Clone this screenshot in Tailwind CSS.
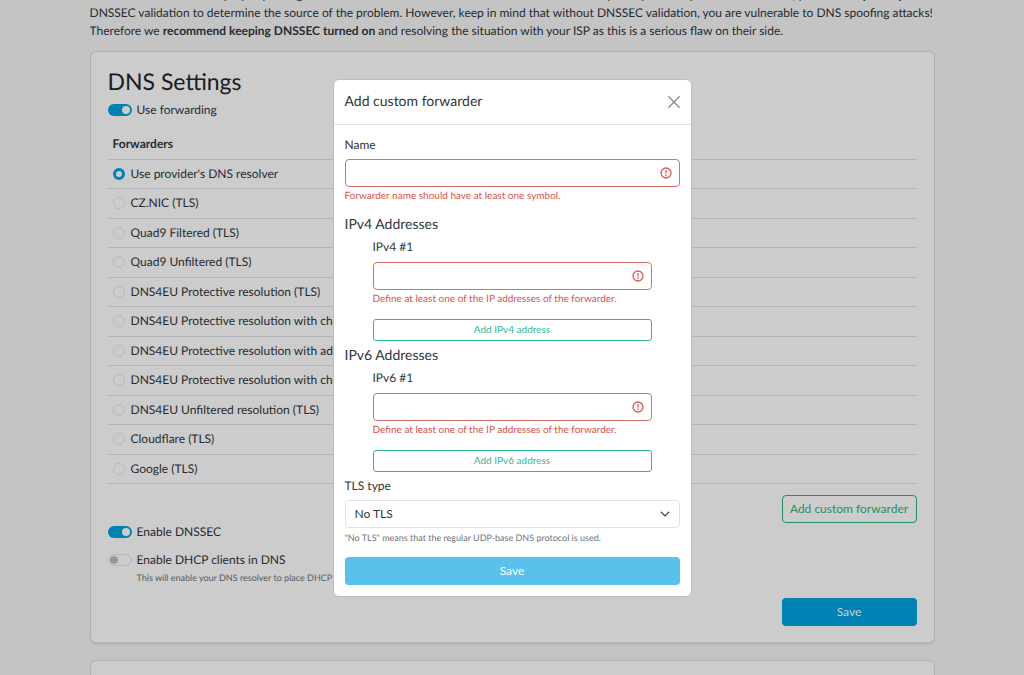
<!DOCTYPE html>
<html lang="en">
<head>
<meta charset="utf-8">
<meta name="viewport" content="width=device-width, initial-scale=1">
<title>DNS Settings</title>
<script src="https://cdn.jsdelivr.net/npm/@tailwindcss/browser@4"></script>
</head>
<body class="h-screen overflow-hidden bg-[#f5f5f5] font-[Lato,sans-serif] text-[12px] leading-[18px] text-[#30363c] [text-rendering:geometricPrecision]">
<main class="mx-auto flex h-full max-w-[845px] flex-col overflow-hidden">
  <p class="-mt-[14px] -mr-3 mb-[11px] shrink-0 leading-[18px]">In rare cases ISPs have improperly configured network which interferes with DNSSEC validation. If you experience problems with DNS, you can <b>temporarily disable</b><br>DNSSEC validation to determine the source of the problem. However, keep in mind that without DNSSEC validation, you are vulnerable to DNS spoofing attacks!<br>Therefore we <b>recommend keeping DNSSEC turned on</b> and resolving the situation with your ISP as this is a serious flaw on their side.</p>

  <section class="shrink-0 rounded-md border border-[#dedede] bg-white px-[17px] pt-[15px] pb-4 shadow-sm">
    <h1 class="text-[23px] leading-7 text-[#212529]">DNS Settings</h1>
    <form>
      <label class="mt-[6px] flex items-center gap-[5px]">
        <input type="checkbox" checked role="switch" class="sr-only">
        <span class="flex h-3 w-6 items-center justify-end rounded-full bg-[#00a2e2] px-[2px]"><span class="size-2 rounded-full bg-white"></span></span>
        Use forwarding
      </label>
      <table class="mt-[11px] h-[354px] w-full border-collapse text-left">
        <thead><tr class="h-[29px] border-b border-[#dee2e6]"><th class="px-[5px] font-bold">Forwarders</th></tr></thead>
        <tbody id="rows"></tbody>
      </table>
      <div class="mt-[11px] flex justify-end">
        <button type="button" class="h-7 w-[135px] rounded border border-[#2fb380] text-[#2fb380]">Add custom forwarder</button>
      </div>
      <label class="flex items-center gap-[5px]">
        <input type="checkbox" checked role="switch" class="sr-only">
        <span class="flex h-3 w-6 items-center justify-end rounded-full bg-[#00a2e2] px-[2px]"><span class="size-2 rounded-full bg-white"></span></span>
        Enable DNSSEC
      </label>
      <label class="mt-[10px] flex items-center gap-[5px]">
        <input type="checkbox" role="switch" aria-describedby="dhcp-help" class="sr-only">
        <span class="flex h-3 w-6 items-center rounded-full border border-[#e6e6e6] px-px"><span class="size-2 rounded-full bg-[#bfbfbf]"></span></span>
        Enable DHCP clients in DNS
      </label>
      <p id="dhcp-help" class="ml-[29px] text-[9px] text-[#6c757d]">This will enable your DNS resolver to place DHCP clients' names among the local DNS records.</p>
      <div class="mt-[11px] flex justify-end">
        <button type="submit" class="h-7 w-[135px] rounded bg-[#00a2e2] text-white">Save</button>
      </div>
    </form>
  </section>
  <section class="mt-[17px] h-40 shrink-0 rounded-md border border-[#dedede] bg-white shadow-sm"></section>
</main>

<div class="fixed inset-0 flex items-start justify-center bg-black/20 pt-[79px]">
  <div role="dialog" aria-modal="true" aria-labelledby="dialog-title" class="w-[359px] rounded-md border border-[#bdbdbd] bg-white">
    <header class="flex h-[45px] items-center justify-between border-b border-[#dee2e6] px-[11px]">
      <h2 id="dialog-title" class="pb-[2px] text-[14px]">Add custom forwarder</h2>
      <button type="button" aria-label="Close" class="text-[#8c8c8c]">
        <svg class="size-3" viewBox="0 0 12 12" fill="none" stroke="currentColor" stroke-width="1.4" stroke-linecap="round"><path d="M.8.8 11.2 11.2M11.2.8.8 11.2"/></svg>
      </button>
    </header>
    <form class="px-[11px] pt-[11px] pb-[11px]">
      <label for="name" class="block">Name</label>
      <div class="relative mt-[5px]">
        <input id="name" type="text" aria-invalid="true" aria-describedby="name-error" class="block h-7 w-full rounded border border-[#d8706b] px-2">
        <svg class="pointer-events-none absolute top-2 right-2 size-3" viewBox="0 0 12 12" fill="none" stroke="#d85c56" stroke-width="1.3"><circle cx="6" cy="6" r="5"/><path d="M6 3v3.6M6 7.6v1.3"/></svg>
      </div>
      <p id="name-error" class="text-[10px] text-[#d9534f]">Forwarder name should have at least one symbol.</p>

      <h3 class="mt-[10px] text-[14px]">IPv4 Addresses</h3>
      <div class="mt-[5px] px-7">
        <label for="ip4" class="block">IPv4 #1</label>
        <div class="relative mt-[6px]">
          <input id="ip4" type="text" aria-invalid="true" aria-describedby="ip4-error" class="block h-7 w-full rounded border border-[#d8706b] px-2">
          <svg class="pointer-events-none absolute top-2 right-2 size-3" viewBox="0 0 12 12" fill="none" stroke="#d85c56" stroke-width="1.3"><circle cx="6" cy="6" r="5"/><path d="M6 3v3.6M6 7.6v1.3"/></svg>
        </div>
        <p id="ip4-error" class="text-[10px] text-[#d9534f]">Define at least one of the IP addresses of the forwarder.</p>
        <button type="button" class="mt-[11px] block h-[22px] w-full rounded-[3px] border border-[#2fb795] pb-[2px] text-[10px] leading-none text-[#2fb795]">Add IPv4 address</button>
      </div>

      <h3 class="mt-[5px] text-[14px]">IPv6 Addresses</h3>
      <div class="mt-[5px] px-7">
        <label for="ip6" class="block">IPv6 #1</label>
        <div class="relative mt-[6px]">
          <input id="ip6" type="text" aria-invalid="true" aria-describedby="ip6-error" class="block h-7 w-full rounded border border-[#d8706b] px-2">
          <svg class="pointer-events-none absolute top-2 right-2 size-3" viewBox="0 0 12 12" fill="none" stroke="#d85c56" stroke-width="1.3"><circle cx="6" cy="6" r="5"/><path d="M6 3v3.6M6 7.6v1.3"/></svg>
        </div>
        <p id="ip6-error" class="text-[10px] text-[#d9534f]">Define at least one of the IP addresses of the forwarder.</p>
        <button type="button" class="mt-[11px] block h-[22px] w-full rounded-[3px] border border-[#2fb795] pb-[2px] text-[10px] leading-none text-[#2fb795]">Add IPv6 address</button>
      </div>

      <label for="tls" class="mt-[5px] block">TLS type</label>
      <div class="relative mt-[5px]">
        <select id="tls" aria-describedby="tls-help" class="block h-7 w-full appearance-none rounded border border-[#dee2e6] bg-white px-[9px]"><option>No TLS</option></select>
        <svg class="pointer-events-none absolute top-[9px] right-[10px] size-[10px]" viewBox="0 0 16 16" fill="none" stroke="#343a40" stroke-width="2" stroke-linecap="round" stroke-linejoin="round"><path d="m2 5 6 6 6-6"/></svg>
      </div>
      <p id="tls-help" class="mt-px text-[9px] text-[#6c757d]">"No TLS" means that the regular UDP-base DNS protocol is used.</p>
      <button type="submit" class="mt-[10px] block h-7 w-full rounded bg-[#59c1ec] text-white">Save</button>
    </form>
  </div>
</div>
<script>
  const names = ["Use provider's DNS resolver", "CZ.NIC (TLS)", "Quad9 Filtered (TLS)", "Quad9 Unfiltered (TLS)",
    "DNS4EU Protective resolution (TLS)", "DNS4EU Protective resolution with child protection (TLS)",
    "DNS4EU Protective resolution with ad blocking (TLS)", "DNS4EU Protective resolution with child protection and ad blocking (TLS)",
    "DNS4EU Unfiltered resolution (TLS)", "Cloudflare (TLS)", "Google (TLS)"];
  document.getElementById("rows").innerHTML = names.map((n, i) => `
    <tr class="border-b border-[#dee2e6]"><td class="px-[5px]">
      <label class="flex items-center gap-[6px]"><input type="radio" name="forwarder" ${i ? "" : "checked"}
        class="size-3 appearance-none rounded-full border border-[#e8e8e8] checked:border-[3px] checked:border-[#00a2e2] checked:bg-white">${n}</label>
    </td></tr>`).join("");
</script>
</body>
</html>
